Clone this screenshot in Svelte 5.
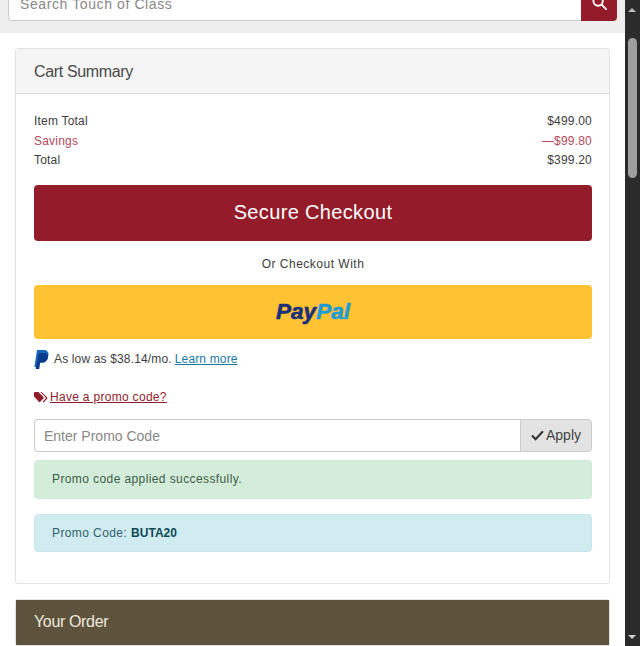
<script lang="ts">
	const totals = [
		{ label: 'Item Total', value: '$499.00', cls: '' },
		{ label: 'Savings', value: '—$99.80', cls: 'savings' },
		{ label: 'Total', value: '$399.20', cls: '' }
	];
	let promo = $state('');
</script>

<div class="window">
	<div class="page">
		<div class="topbar">
			<div class="search">
				<input class="search-input" placeholder="Search Touch of Class" />
				<button class="search-btn" aria-label="Search">
					<svg width="15" height="15" viewBox="0 0 16 16" fill="none" stroke="#fff" stroke-width="2">
						<circle cx="6.5" cy="6.5" r="5" />
						<path d="M10.3 10.3 15 15" stroke-linecap="round" />
					</svg>
				</button>
			</div>
		</div>

		<section class="card">
			<h2 class="card-header">Cart Summary</h2>
			<div class="card-body">
				<div class="totals">
					{#each totals as row}
						<div class="total-row {row.cls}">
							<span>{row.label}</span>
							<span>{row.value}</span>
						</div>
					{/each}
				</div>

				<button class="checkout">Secure Checkout</button>
				<p class="or">Or Checkout With</p>

				<button class="paypal">
					<span class="pay">Pay</span><span class="pal">Pal</span>
				</button>

				<div class="credit">
					<svg class="pp-mark" width="15" height="19" viewBox="0 0 15 19">
						<path d="M3 0h6.500C13 0 15 2 14.400 5.200 13.800 8.800 11.200 11 7.800 11H5.600l-1 6H0.400z" fill="#1565b8" />
						<path d="M5 3h5c2.600 0 4.400 1.600 4 4.400-.5 3.200-3 5.300-6 5.300H6.200L5.200 19H1.600z" fill="#0b3c8c" />
					</svg>
					<span>As low as $38.14/mo.</span>
					<a href="#learn" class="learn">Learn more</a>
				</div>

				<div class="promo-link">
					<svg width="14" height="11" viewBox="0 0 14 11" fill="#8f1d2c">
						<path d="M0 1.200C0 .5.500 0 1.200 0h3.200l5 5c.4.400.4 1 0 1.400L6.200 9.700c-.4.400-1 .4-1.400 0L0 4.600z" />
						<path d="M6.200 0h1.300l5.600 5.200c.5.500.5 1.100 0 1.600L9.600 10.400l-.9-.9 3-3.100c.3-.3.3-.7 0-1z" />
					</svg>
					<a href="#promo">Have a promo code?</a>
				</div>

				<div class="promo-group">
					<input class="promo-input" placeholder="Enter Promo Code" bind:value={promo} />
					<button class="apply">
						<svg width="13" height="11" viewBox="0 0 13 11" fill="none" stroke="#333" stroke-width="2">
							<path d="M1 5.500 4.600 9.200 12 1.200" />
						</svg>
						Apply
					</button>
				</div>

				<div class="alert success">Promo code applied successfully.</div>
				<div class="alert info">Promo Code: <strong>BUTA20</strong></div>
			</div>
		</section>

		<section class="card order">
			<h2 class="card-header">Your Order</h2>
		</section>
	</div>

	<div class="scrollbar">
		<span class="arrow up"></span>
		<div class="track"><div class="thumb"></div></div>
		<span class="arrow down"></span>
	</div>
</div>

<style>
	:global(body) {
		margin: 0;
		background: #fff;
	}

	.window {
		display: flex;
		width: 640px;
		height: 646px;
		overflow: hidden;
		font-family: 'Liberation Sans', Arial, sans-serif;
		font-size: 12px;
		color: #3d3d3d;
	}

	.page {
		width: 625px;
		flex: none;
	}

	.topbar {
		height: 33px;
		box-sizing: border-box;
		background: #eee;
		padding: 0 8px 12px;
		overflow: hidden;
		display: flex;
		align-items: flex-end;
	}

	.search {
		display: flex;
		width: 609px;
		height: 34px;
		flex: none;
	}

	.search-input {
		flex: 1;
		min-width: 0;
		box-sizing: border-box;
		border: 1px solid #ccc;
		border-right: 0;
		border-radius: 4px 0 0 4px;
		padding: 0 11px;
		font: 14px 'Liberation Sans', Arial, sans-serif;
		letter-spacing: 0.6px;
		background: #fff;
	}

	.search-input::placeholder {
		color: #888;
		opacity: 1;
	}

	.search-btn {
		width: 36px;
		border: 0;
		padding: 0 0 11px;
		background: #941c2a;
		border-radius: 0 4px 4px 0;
		display: flex;
		align-items: flex-end;
		justify-content: center;
	}

	.card {
		margin: 15px 15px 0;
		border: 1px solid #e2e2e2;
		border-radius: 3px;
		background: #fff;
	}

	.card-header {
		margin: 0;
		height: 45px;
		box-sizing: border-box;
		padding: 2px 18px 0;
		display: flex;
		align-items: center;
		background: #f5f5f5;
		border-bottom: 1px solid #ddd;
		font-size: 16px;
		font-weight: 400;
		letter-spacing: -0.35px;
		color: #4a4a4a;
	}

	.card-body {
		padding: 18px 17px 31px 18px;
	}

	.total-row {
		display: flex;
		justify-content: space-between;
		height: 19.500px;
		line-height: 19.500px;
		letter-spacing: 0.2px;
	}

	.savings {
		color: #b5485c;
	}

	.checkout {
		display: block;
		width: 100%;
		height: 56px;
		margin-top: 14px;
		border: 0;
		border-radius: 4px;
		background: #941c2a;
		color: #fff;
		font: 20px 'Liberation Sans', Arial, sans-serif;
		letter-spacing: 0.35px;
	}

	.or {
		margin: 16px 0 13px;
		text-align: center;
		line-height: 15px;
		letter-spacing: 0.5px;
	}

	.paypal {
		display: block;
		width: 100%;
		height: 54px;
		border: 0;
		border-radius: 4px;
		background: #ffc233;
		font: italic 700 22.500px 'Liberation Sans', Arial, sans-serif;
		padding: 0;
	}

	.pay {
		color: #1b2f7a;
		-webkit-text-stroke: 0.6px #1b2f7a;
	}

	.pal {
		color: #1f9bd6;
		-webkit-text-stroke: 0.6px #1f9bd6;
	}

	.credit {
		display: flex;
		align-items: center;
		gap: 3px;
		height: 19px;
		margin-top: 11px;
		letter-spacing: 0.15px;
	}

	.credit span {
		margin-left: 2px;
	}

	.pp-mark {
		flex: none;
	}

	.learn {
		color: #1a7aa6;
		text-decoration: underline;
	}

	.promo-link {
		display: flex;
		align-items: center;
		gap: 2px;
		margin-top: 19px;
		height: 19px;
	}

	.promo-link a {
		color: #8f1d2c;
		text-decoration: underline;
		letter-spacing: 0.3px;
	}

	.promo-group {
		display: flex;
		height: 33px;
		margin-top: 12px;
	}

	.promo-input {
		flex: 1;
		min-width: 0;
		box-sizing: border-box;
		border: 1px solid #ccc;
		border-right: 0;
		border-radius: 4px 0 0 4px;
		padding: 1px 10px 0 9px;
		font: 14px 'Liberation Sans', Arial, sans-serif;
	}

	.promo-input::placeholder {
		color: #888;
		opacity: 1;
	}

	.apply {
		width: 72px;
		box-sizing: border-box;
		border: 1px solid #ccc;
		border-radius: 0 4px 4px 0;
		background: #e3e3e3;
		color: #444;
		font: 14px 'Liberation Sans', Arial, sans-serif;
		padding: 0;
		display: flex;
		align-items: center;
		justify-content: center;
		gap: 2px;
	}

	.alert {
		box-sizing: border-box;
		padding: 0 17px;
		display: flex;
		align-items: center;
		gap: 4px;
		border-radius: 4px;
		border: 1px solid transparent;
		letter-spacing: 0.4px;
	}

	.success {
		height: 39px;
		margin-top: 8px;
		background: #d4edda;
		border-color: #cfe9d6;
		color: #3d5c48;
	}

	.info {
		height: 38px;
		margin-top: 15px;
		background: #d1ecf1;
		border-color: #c8e7ed;
		color: #31606d;
	}

	.info strong {
		letter-spacing: 0;
		color: #0c4a55;
	}

	.order .card-header {
		padding-top: 0;
		background: #5d533c;
		border-color: #5d533c;
		color: #eee9dd;
	}

	.scrollbar {
		width: 15px;
		flex: none;
		background: #2b2b2b;
		position: relative;
	}

	.track {
		padding-top: 38px;
	}

	.thumb {
		width: 9px;
		height: 140px;
		margin: 0 auto;
		background: #9f9f9f;
		border-radius: 5px;
	}

	.arrow {
		position: absolute;
		left: 3px;
		width: 0;
		height: 0;
		border-left: 4.500px solid transparent;
		border-right: 4.500px solid transparent;
	}

	.up {
		top: 8px;
		border-bottom: 4px solid #bbb;
	}

	.down {
		bottom: 7px;
		border-top: 4px solid #d0d0d0;
	}
</style>
